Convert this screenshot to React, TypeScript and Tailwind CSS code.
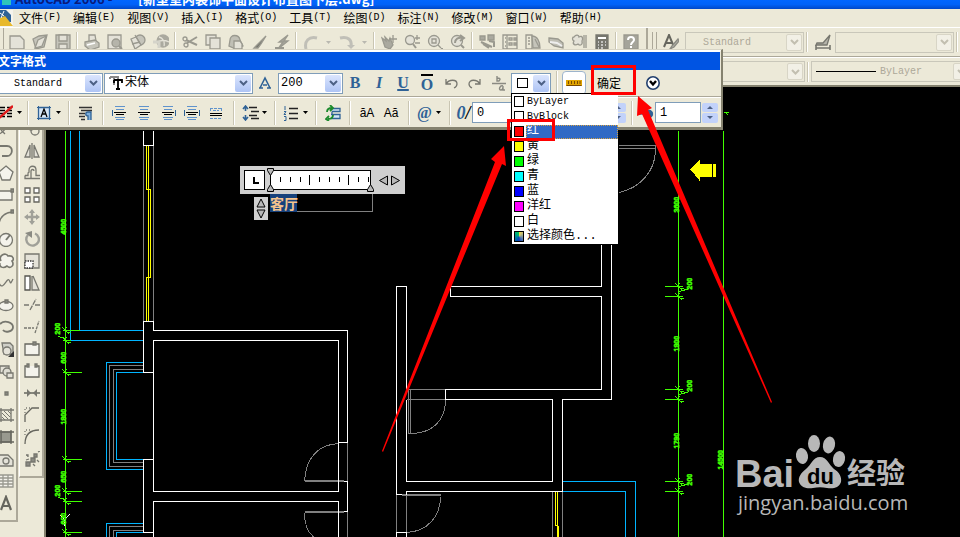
import React from "react";

type Node = React.ReactNode;

const MONO = "font-['Liberation_Mono','Noto_Sans_CJK_SC',monospace]";
const CJK = "font-['Noto_Sans_CJK_SC',sans-serif]";

function Glyph({ children, w = 16, color = "#8a8a82" }: { children: Node; w?: number; color?: string }) {
  return (
    <svg width={w} height={16} viewBox={`0 0 ${w} 16`} fill="none" stroke={color} strokeWidth={1.3} className="shrink-0" aria-hidden="true">
      {children}
    </svg>
  );
}

/* ---------- standard toolbar glyphs ---------- */
const F = "#e4e2d8";
const std: Record<string, Node> = {
  new: <path d="M1 2h10l4 4v9H1z" fill={F} />,
  open: <><path d="M1 5l6-3 8-1-3 12-8 2z" fill="#c5c4ba" /><path d="M6 6l8-4-4 10-7 2z" fill={F} /></>,
  save: <><path d="M1 1h14v14H1z" fill="#c5c4ba" /><path d="M4 1h8v6H4zM4 10h8v5H4z" fill={F} /></>,
  print: <><path d="M5 7V1h6l1 6" fill={F} /><path d="M1 8l10-2 4 3v4l-9 3-5-4z" fill="#c5c4ba" /><path d="M3 11l8-2" stroke="#fff" /></>,
  preview: <><path d="M1 1h13v14H1z" fill={F} /><circle cx="9" cy="9" r="4" fill="#b5b4aa" /><path d="M12 12l3 3" strokeWidth={2} /></>,
  publish: <><circle cx="10" cy="6" r="5" fill="#c5c4ba" /><path d="M1 5l5-2 5 8-6 4z" fill={F} /><path d="M2 10l8-2M5 1l6 10" /></>,
  globe: <><circle cx="10" cy="7" r="6" fill="#aaa99f" stroke="#aaa99f" /><path d="M6 3c4 1 6 5 5 9M4 8c4-2 8-2 12 0" stroke={F} /><path d="M0 8h6v6" stroke="#d5d4ca" strokeWidth={3} /></>,
  cut: <><path d="M15 3L5 9M15 11L4 6" strokeWidth={2} /><circle cx="3" cy="5" r="2" /><circle cx="4" cy="11" r="2" /></>,
  copy: <><path d="M1 1h10v10H1z" fill={F} /><path d="M5 4h10v11H5z" fill={F} /></>,
  paste: <><path d="M2 6c0-6 9-6 10 0l3 6-7 3-7-3z" fill="#c0bfb5" /><path d="M6 7h6l2 3v5H6z" fill={F} /></>,
  brush: <path d="M15 2L8 9l-5 5h4l3-4z" fill="#77776f" />,
  edit: <><path d="M14 1L5 8h4l-5 7 10-8h-4z" fill="#a5a49a" /><path d="M1 14h9" strokeWidth={2} /></>,
  undo: <path d="M3 15C1 7 6 2 14 4" strokeWidth={3} stroke="#c0bfb7" />,
  redo: <><path d="M1 4c8-2 12 2 11 8" strokeWidth={3} stroke="#c0bfb7" /><path d="M8 11h8l-4 4z" fill="#c0bfb7" stroke="none" /></>,
  pan: <><path d="M1 4l4 3-1-4 4 4 1-3 3 7-3 4-5-2z" fill="#aaa99f" /><path d="M12 1v8M8 5h8" /></>,
  zoom: <><circle cx="6" cy="6" r="4.5" fill={F} /><path d="M9 10l3 4" strokeWidth={2} /><path d="M13 1v5M11 4h5M11 9h5" /></>,
  zoomw: <><circle cx="7" cy="7" r="5.5" fill={F} /><path d="M5 5h4v4H5zM11 11l3 3" /><path d="M15 14v2" strokeWidth={2} /></>,
  zoomp: <><circle cx="7" cy="7" r="5.5" fill={F} /><path d="M11 11l3 3" strokeWidth={2} /><path d="M5 9c0-4 3-6 8-5M10 1l4 3-4 3" strokeWidth={2} /></>,
  props: <><path d="M1 2h5v4H1zM9 1h6v5H9z" fill="#aaa99f" /><path d="M2 8l11 5M4 10l6 4M10 7l5 1v5" strokeWidth={2} /></>,
  center: <path d="M1 1h14v14H1zM5 1v14M3 4h1M3 8h1M3 12h1M7 4h3v2H7zM12 4h2v2h-2zM7 9h3v2H7zM12 9h2v2h-2z" />,
  palette: <><path d="M1 1h6v14H1zM3 4h2M3 7h2M3 10h2" /><path d="M7 2c5 0 8 5 8 12H8z" fill="#c5c4ba" /><path d="M10 5l4 8" /></>,
  sheet: <><path d="M1 4l9 1 5 4v5l-9-2-5-4z" fill="#c0bfb5" /><path d="M2 8l7 1 5 3" stroke="#eee" strokeWidth={2} /></>,
  markup: <><path d="M3 3c2-3 5-2 5 0 4-2 4 2 3 4 1 4-2 5-4 3-3 2-6 0-4-3-2-1-2-4 0-4z" fill={F} /><path d="M13 1v13M15 1v13" /></>,
  calc: <><path d="M2 1h12v14H2z" fill="#77776f" stroke="#77776f" /><path d="M4 4h8" stroke="#fff" strokeWidth={2} /><path d="M4 8h1M7 8h2M11 8h1M4 11h1M7 11h2M11 11h1M4 14h1M7 14h2" stroke="#ddd" /></>,
  help: <><path d="M1 1h14v14H1z" fill="#a5a49a" /><path d="M5 6c0-4 6-4 6 0 0 2-3 2-3 5M8 12v2" stroke="#fff" strokeWidth={2} /></>,
};

/* ---------- draw and modify palette glyphs ---------- */
const draw: [string, Node][] = [
  ["直线", <path d="M2 14L14 2" />],
  ["构造线", <path d="M1 13c4-1 7-6 12-12M3 9l4 4" />],
  ["多段线", <path d="M2 3h7c7 0 6 10 0 10H4" strokeWidth={1.8} />],
  ["正多边形", <path d="M8 1l7 6-3 8H4L1 7z" fill="#f4f3ec" />],
  ["矩形", <><path d="M1 4h13v9H1z" fill="#f4f3ec" /><path d="M13 2h3v3h-3z" fill="#8a8a82" /></>],
  ["圆弧", <><path d="M1 15C2 8 6 4 14 3" /><path d="M13 1h3v3h-3z" fill="#8a8a82" /></>],
  ["圆", <><circle cx="8" cy="9" r="6.5" fill="#f4f3ec" /><path d="M8 9l4-5" strokeWidth={2} /></>],
  ["修订云线", <path d="M3 8C0 2 8-1 10 3c6-1 6 4 4 5 3 5-2 8-5 5-4 3-8 1-7-3" fill="#f4f3ec" strokeWidth={1.6} />],
  ["样条曲线", <path d="M1 8c4 9 8-6 10-3s1 5 4-1" />],
  ["椭圆", <><ellipse cx="8" cy="9" rx="7" ry="4.5" fill="#f4f3ec" /><path d="M7 3h3v3H7z" fill="#8a8a82" /></>],
  ["椭圆弧", <path d="M2 5c5-5 13-1 13 3 0 5-8 6-10 3" strokeWidth={1.8} />],
  ["插入块", <><path d="M4 2h8l3 3v8H6z" fill="#d0d0c8" /><circle cx="9" cy="10" r="4" fill={F} /><path d="M16 10v6h-6z" fill="#333" stroke="none" /></>],
  ["创建块", <><path d="M2 3h9v7H2z" fill={F} /><circle cx="9" cy="9" r="4" fill="#dddcd2" /><path d="M9 10h6v5H9z" fill={F} /></>],
  ["点", <path d="M7 7h3v3H7z" fill="#8a8a82" />],
  ["图案填充", <><path d="M3 1v14M13 1v14M1 3h15M1 13h15" /><path d="M4 6l6 6M4 10l3 3M6 4l6 6M10 4l3 3" strokeWidth={1} /></>],
  ["渐变色", <><path d="M3 3h10v10H3z" fill="#99998f" /><path d="M3 1v14M13 1v14M1 3h15M1 13h15" stroke="#66665e" /></>],
  ["面域", <><path d="M1 4h9l5 5v6H1z" fill={F} /><circle cx="8" cy="10" r="3" /></>],
  ["表格", <path d="M1 2h14v12H1zM1 5h14M1 8h14M1 11h14M5 2v12M10 2v12" fill="#f4f3ec" stroke="#99998f" />],
  ["多行文字", <path d="M3 15L8 2l5 13M5 11h7" strokeWidth={2.2} stroke="#66665e" />],
];
const modify: [string, Node][] = [
  ["删除", <path d="M2 12l8-8 4 3-8 7z" fill={F} />],
  ["复制", <><circle cx="7" cy="5" r="4" /><circle cx="11" cy="10" r="4" /></>],
  ["镜像", <path d="M6 2v12H1zM10 2v12h5zM8 0v16" fill={F} />],
  ["偏移", <path d="M1 10.500h3V9C4 7 5 7 5 7V5c0-5 7-5 7 0v5.500h4M1 10.500v3h15M7 13V6c0-2 3-2 3 0" />],
  ["阵列", <path d="M1 1h5v5H1zM10 1h5v5h-5zM1 10h5v5H1zM10 10h5v5h-5z" fill="#fff" stroke="#66665e" />],
  ["移动", <g stroke="#a0a098"><path d="M8 2v12M2 8h12" strokeWidth={2.4} /><path d="M8 0l3 4H5zM8 16l3-4H5zM0 8l4-3v6zM16 8l-4-3v6z" fill="#a0a098" stroke="none" /></g>],
  ["旋转", <g stroke="#a0a098"><path d="M4 4a6.300 6.300 0 1 0 7-1.500" strokeWidth={2.4} /><path d="M1 2l7-2v7z" fill="#8a8a82" stroke="none" /></g>],
  ["缩放", <><path d="M1 1h14v14H1z" fill={F} /><path d="M1 8h8v7H1z" strokeDasharray="1.500 1" stroke="#333" fill="#fff" /></>],
  ["拉伸", <><path d="M1 1h5v14H1z" fill="#fff" stroke="#55554f" /><path d="M8 1v14h7L9 1" fill={F} /></>],
  ["修剪", <path d="M0 8h5M11 8h5M6 13l6-11" strokeDasharray="5 1" />],
  ["延伸", <path d="M0 9h10M11 14l4-12" strokeDasharray="3 1" />],
  ["打断于点", <><path d="M1 3h14v11H1z" fill="#f4f3ec" stroke="#66665e" /><path d="M9 1h3v3H9z" fill="#8a8a82" /></>],
  ["打断", <><path d="M4 3H1v11h14V3h-3" fill="#f4f3ec" stroke="#66665e" /><path d="M3 1h2v3H3zM11 1h2v3h-2z" fill="#8a8a82" /></>],
  ["合并", <><path d="M0 8h16" strokeWidth={1.5} stroke="#66665e" /><path d="M3 4l4 4-4 4zM13 4L9 8l4 4z" fill="#77776f" stroke="none" /></>],
  ["倒角", <><path d="M1 15V8l7-7h7" stroke="#66665e" /><path d="M1 6V1h6" strokeDasharray="1 2" /></>],
  ["圆角", <><path d="M1 15C1 6 6 1 15 1" stroke="#66665e" /><path d="M1 6V1h6" strokeDasharray="1 2" /></>],
  ["分解", <path d="M2 11h4v4H2zM7 7h4v4H7zM10 3h3v3h-3zM2 4h2v2M5 8l-3 1M14 1l2-1M13 9l2 2M9 13l2 2" fill="#8a8a82" />],
];

function ToolBtn({ label, children, className = "w-6" }: { label: string; children: Node; className?: string }) {
  return (
    <button aria-label={label} className={`flex h-6 shrink-0 items-center justify-center ${className}`}>
      {children}
    </button>
  );
}

const Sep = () => (
  <div className="flex w-[11px] shrink-0 justify-center">
    <div className="h-6 w-0.5 border-r border-white bg-[#c9c5b2]" />
  </div>
);
const ThinSep = () => <div className="mx-[2px] h-5 w-0.5 shrink-0 border-r border-white bg-[#c9c5b2]" />;

function Tri({ color = "#000" }: { color?: string }) {
  return <svg width="5" height="3" viewBox="0 0 5 3" className="shrink-0" aria-hidden="true"><path d="M0 0h5L2.500 3z" fill={color} /></svg>;
}

function Combo({ label, value, className, disabled = false, pre, pad = "pl-3" }: {
  label: string; value: string; className: string; disabled?: boolean; pre?: Node; pad?: string;
}) {
  return (
    <label className={`flex h-[21px] shrink-0 items-center border p-px ${MONO} ${disabled ? "border-[#c9c7ba] bg-[#ece9d8] text-[#aca899]" : "border-[#7f9db9] bg-white text-black"} ${className}`}>
      {pre}
      <select aria-label={label} disabled={disabled} className={`h-full min-w-0 flex-1 appearance-none bg-transparent opacity-100 ${pad}`}>
        <option>{value}</option>
      </select>
      <span className={`flex h-full w-4 items-center justify-center rounded-xs ${disabled ? "border border-[#d8d5c6] bg-[#f2f0e6]" : "bg-linear-to-b from-[#dbe5fd] to-[#aec4f5]"}`}>
        <svg width="9" height="6" viewBox="0 0 9 6" fill="none" stroke={disabled ? "#c2bfb0" : "#4d6185"} strokeWidth="2" aria-hidden="true"><path d="M1 1l3.500 3.500L8 1" /></svg>
      </span>
    </label>
  );
}

function Spin() {
  return (
    <span className="ml-px flex h-5 w-4 shrink-0 flex-col gap-px">
      {["M1 4l3-3 3 3z", "M1 1l3 3 3-3z"].map((d, i) => (
        <button key={d} aria-label={i ? "减小" : "增大"} className="flex flex-1 items-center justify-center rounded-xs bg-[#c2d2fa]">
          <svg width="8" height="5" viewBox="0 0 8 5"><path d={d} fill="#4d6185" /></svg>
        </button>
      ))}
    </span>
  );
}

function NumBox({ label, value, className }: { label: string; value: string; className: string }) {
  return (
    <>
      <input aria-label={label} defaultValue={value} className={`h-[21px] shrink-0 border border-[#7f9db9] bg-white pl-1 text-xs outline-none ${MONO} ${className}`} />
      <Spin />
    </>
  );
}

/* ---------- application chrome ---------- */
const menus: [string, string][] = [
  ["文件", "F"], ["编辑", "E"], ["视图", "V"], ["插入", "I"], ["格式", "O"], ["工具", "T"],
  ["绘图", "D"], ["标注", "N"], ["修改", "M"], ["窗口", "W"], ["帮助", "H"],
];

const stdGroups: string[][] = [
  ["new", "open", "save"],
  ["print", "preview", "publish", "globe"],
  ["cut", "copy", "paste", "brush", "edit"],
  ["undo", "v", "redo", "v"],
  ["pan", "zoom", "zoomw", "zoomp"],
  ["props", "center", "palette", "sheet", "markup", "calc"],
  ["help"],
];

function Chrome() {
  return (
    <header className="shrink-0 bg-[#ece9d8]">
      <div className="flex h-[9px] items-end overflow-hidden bg-linear-to-b from-[#0066ff] via-[#0062f8] to-[#0048c8]">
        <div className={`mb-[4px] flex pl-[2px] text-[13px] leading-[13px] font-bold whitespace-pre ${CJK}`}>
          <span className="flex w-[136px] items-end gap-1 text-[#0a1a7a]"><i className="h-[5px] w-[9px] bg-[#2fc4bb]" />AutoCAD 2006 -</span>
          <span className="text-white">[新型室内装饰平面设计布置图下层.dwg]</span>
        </div>
      </div>
      <nav className="flex h-[19px] items-center border-b border-white">
        <svg width="13" height="17" viewBox="0 0 13 17" className="mr-[6px] shrink-0" aria-hidden="true">
          <path d="M0 0h13v17H0z" fill="#f4f3ec" /><path d="M0 0h6l5 5v7H0z" fill="#2f6296" />
          <path d="M0 8l5-2 8 10H0z" fill="#e8b92c" /><path d="M0 3l4 3M4 1L1 8" stroke="#fff" />
        </svg>
        <div className="flex gap-3">
          {menus.map(([t, k]) => (
            <button key={k} className={`flex items-center text-xs leading-4 ${CJK}`}>
              {t}<span className={`text-[10px] ${MONO}`}>({k})</span>
            </button>
          ))}
        </div>
      </nav>
      <div className="flex h-[29px] items-center overflow-hidden border-b border-[#aca899] pl-[3px]">
        <div className="mr-px h-full w-px bg-[#aca899]" />
        {stdGroups.map((g, i) => (
          <React.Fragment key={i}>
            {i > 0 && <ThinSep />}
            {g.map((n, j) =>
              n === "v" ? <ToolBtn key={j} label="更多" className="w-[13px]"><Tri color="#b9b8b0" /></ToolBtn>
                : <ToolBtn key={j} label={n} className="w-[23px]"><Glyph color="#9a998f">{std[n]}</Glyph></ToolBtn>
            )}
          </React.Fragment>
        ))}
        <div className="ml-1 flex h-full gap-[3px] border-l-2 border-[#aca899] py-1 pl-1">
          <div className="w-px bg-[#aca899]" /><div className="w-px bg-[#aca899]" />
        </div>
        <ToolBtn label="文字样式" className="mx-px w-[26px]">
          <Glyph color="#66665e"><path d="M1 13L6 1l5 12M3 9h6" strokeWidth={2} /><path d="M15 5L9 12l-2 3 4-2 5-6z" fill="#b5b4aa" stroke="#8a8a82" /></Glyph>
        </ToolBtn>
        <Combo label="文字样式" value="Standard" disabled className="w-[119px] text-[10px]" pad="pl-4" />
        <ThinSep />
        <ToolBtn label="标注样式" className="w-[25px]">
          <Glyph color="#77776f"><path d="M15 1L8 9H2l-1 2h11z" fill="#b5b4aa" /><path d="M1 14h14M1 11v5M15 11v5" strokeWidth={1.6} /></Glyph>
        </ToolBtn>
        <Combo label="标注样式" value="" disabled className="w-[119px]" />
        <ThinSep />
      </div>
      <div className="flex h-[30px] items-center overflow-hidden border-t border-b-2 border-t-white border-b-[#85826f] pl-[640px]">
        <Combo label="颜色" value="" disabled className="w-[165px]" />
        <ThinSep />
        <Combo label="线型" value="ByLayer" disabled className="w-[160px] text-[10px]" pad="pl-1" pre={<span className="ml-[3px] h-px w-[60px] bg-black" />} />
      </div>
    </header>
  );
}

function Palette({ items, className, slot }: { items: [string, Node][]; className: string; slot: string }) {
  return (
    <div className={`flex flex-col self-start overflow-hidden border-r-2 border-b-2 border-[#aca899] pt-[9px] pb-[6px] ${className}`}>
      {items.map(([label, g]) => (
        <button key={label} aria-label={label} className={`flex h-[22px] shrink-0 items-center justify-center ${slot}`}>
          <Glyph color="#77776f">{g}</Glyph>
        </button>
      ))}
    </div>
  );
}

/* ---------- drawing area ---------- */
function Tick({ x, y, to }: { x: number; y: number; to: [number, number] }) {
  return <path d={`M${to[0]} ${y}H${to[1]}M${x - 3} ${y - 3}l7 7M${x - 3} ${y + 1}l4-4M${x + 1} ${y + 2}h4`} />;
}

const dims: [string, number, number][] = [
  ["4500", 65, 234], ["200", 59, 334], ["600", 65, 363], ["1800", 65, 424], ["650", 65, 482],
  ["200", 59, 496], ["600", 65, 524], ["3600", 678, 212], ["200", 691, 289], ["1900", 678, 351],
  ["200", 691, 391], ["1790", 678, 448], ["200", 691, 485], ["14500", 722, 469],
];

function Plan() {
  return (
    <svg width="914" height="450" viewBox="45.500 86.500 914 450" fill="none" strokeWidth="1" shapeRendering="crispEdges" className="block shrink-0" role="img" aria-label="平面图">
      <g stroke="#808080">
        <path d="M143 145V321M153 145V321" />
        <path d="M143 365H109V466H143M143 369H113V462H143M143 526H109V537M143 530H113V537" />
        <path d="M347 442V481M347 511V537M396 494V532M406 494V532M552 491V537M562 491V537" />
        <path d="M445 389H408V433H410V389M406 399H445V402C444 420 432 433 410 433" />
        <path d="M338 443C318 444 305 457 304 481M304 512C304 524 308 533 314 537M440 496C440 516 427 531 406 532" />
        <path d="M304 480.500H343M304 511.500H343M401 494.500H440" strokeWidth="2" />
        <path d="M618 145H655V151C654 171 640 187 619 192M618 148H655" />
      </g>
      <g stroke="#00b4ff">
        <path d="M70 130V340H143M79 130V330H143" />
        <path d="M143 362H106V469H143M143 372H116V459H143M143 523H106V537M143 532H116V537" />
        <path d="M562 491V481H635V537M562 491H625V537" />
      </g>
      <g stroke="#ffff00">
        <path d="M146 145V189H150V277H146V321M148 145V321M555 491V525H557V537M557 491V525M558 525V537" />
      </g>
      <path d="M690 169l9-10v4h12v13h-12v4zM712 163h3v13h-3z" fill="#ffff00" />
      <g stroke="#ffffff">
        <path d="M143 130V145H153V130M153 321H143V372H153M153 321V330H347V442H338M153 491V340H338V491H153" />
        <path d="M153 459H143V532H153M153 537V501H338V537M343 481H347V511H343" />
        <path d="M401 494H396V286H406V389M406 399V481H552V399H445V389H601V296H450V286H601V244M611 244V399H562V491H406V494M396 537V532H406V537" />
        <path d="M64 525V519M60 515l4 4 5-5" />
      </g>
      <g stroke="#40ff00">
        <path d="M65 130V537M678 130V537M723 130V537M62 330H79M723 112h5M725 112l3 3" />
        {[330, 340, 372, 459, 491, 501, 532].map((y) => <Tick key={y} x={65} y={y} to={[62, y === 330 || y === 340 ? 70 : 81]} />)}
        {[286, 296, 389, 399, 481, 491].map((y) => <Tick key={y} x={678} y={y} to={[664, 682]} />)}
        <path d="M679 291l10-3M679 394l10-3M679 486l10-3M58 336l7 2M58 497l7 2" />
      </g>
      <g fill="#40ff00" stroke="#40ff00" strokeWidth="0.500" className="font-['Liberation_Sans',sans-serif] text-[7px] font-bold">
        {dims.map(([t, x, y], i) => <text key={i} transform={`translate(${x} ${y}) rotate(-90)`}>{t}</text>)}
      </g>
    </svg>
  );
}

function InPlaceText() {
  return (
    <div className="absolute top-[166px] left-[240px]">
      <svg width="165" height="28" viewBox="0 0 165 28" shapeRendering="crispEdges" className="block" aria-hidden="true">
        <path d="M0 0h165v28H0z" fill="#d0d0d0" />
        <path d="M4.500 4.500h20v19h-20zM30.500 4.500h100v19h-100z" fill="#fff" stroke="#000" />
        <path d="M14 11v6h5" fill="none" stroke="#000" strokeWidth="2" />
        <path d="M40.500 11v5M50.500 11v5M60.500 11v5M69.500 9v10M79.500 11v5M89.500 11v5M99.500 11v5M108.500 9v10M118.500 11v5M128.500 11v5" stroke="#000" />
        <g fill="#b8b8b8" stroke="#000" shapeRendering="auto">
          <path d="M27.500 2.500h6v2l-3 5-3-5zM27.500 25.500h6v-2l-3-5-3 5zM127.500 25.500h6v-2l-3-5-3 5z" />
          <path d="M139.500 14.500l8-4.500v9zM159.500 14.500l-8-4.500v9z" />
        </g>
      </svg>
      <div className="flex pl-[14px]">
        <svg width="14" height="23" viewBox="0 0 14 23" className="mt-[3px]" aria-hidden="true">
          <path d="M0 0h14v23H0z" fill="#d0d0d0" /><path d="M7 2l4 8H3zM7 21l4-8H3z" fill="#b8b8b8" stroke="#000" />
        </svg>
        <div className="ml-[2px] h-[18px] w-[103px] border-r border-b border-[#808080]">
          <span className={`block w-[27px] bg-[#16417c] text-sm leading-[18px] font-bold whitespace-nowrap text-[#f5c48e] ${CJK}`}>客厅</span>
        </div>
      </div>
    </div>
  );
}

/* ---------- text formatting bar ---------- */
const BLUE = "#2f6296";

function AlignIcon({ kind }: { kind: "l" | "c" | "r" | "j" | "d" }) {
  if (kind === "d") {
    return (
      <Glyph color="#000">
        <g shapeRendering="crispEdges" strokeWidth={1}>
          <path d="M2 3.500h12M2 13.500h12M2.500 3v4M13.500 3v4M5 5.500h6" stroke="#5f93cc" strokeDasharray="3 1" />
          <path d="M2 8.500h12M2 10.500h12" />
        </g>
      </Glyph>
    );
  }
  return (
    <Glyph color="#000">
      <g shapeRendering="crispEdges" strokeWidth={1}>
        <path d="M3 1.500h10M4 4.500h8M3 12.500h10M4 14.500h8" stroke="#5f93cc" />
        <path d="M2 7.500h12M4 9.500h8" />
        {(kind === "l" || kind === "j") && <path d="M.5 5v6" stroke={BLUE} />}
        {(kind === "r" || kind === "j") && <path d="M15.500 5v6" stroke={BLUE} />}
      </g>
    </Glyph>
  );
}

function Style({ children, className = "" }: { children: Node; className?: string }) {
  return <span className={`font-['Liberation_Serif',serif] text-base leading-4 font-bold text-[#2f6296] ${className}`}>{children}</span>;
}

function FormatBar() {
  return (
    <section aria-label="文字格式" className="absolute top-[49px] left-0 w-[723px] border-t border-r-2 border-b-[3px] border-t-[#d8d5c6] border-r-[#85826f] border-b-[#85826f] bg-[#ece9d8]">
      <div className="border-t-2 border-r border-white border-r-[#ece9d8]">
        <h2 className={`h-[18px] bg-[#0054e3] text-xs leading-[17px] font-bold text-white ${CJK}`}><span className="-ml-[2px]">文字格式</span></h2>
      </div>
      <div className="flex h-[27px] items-center border-b border-[#aca899]">
        <Combo label="样式" value="Standard" className="w-[103px] border-l-0 text-[10px]" pad="pl-[13px]" />
        <Combo label="字体" value="宋体" className="ml-px w-[149px] text-xs" pad="pl-[2px]"
          pre={<svg width="14" height="14" viewBox="0 0 14 14" className="ml-[3px]" aria-hidden="true"><path d="M1 1h8v3M5 1v8M1 1v2" fill="none" stroke="#888" strokeWidth="2" /><path d="M5 4h8v3M9 4v9M5 4v3M7 13h4" fill="none" stroke="#000" strokeWidth="1.800" /></svg>} />
        <ToolBtn label="注释性"><Glyph color={BLUE}><path d="M3 13L8 3l5 10M6 10h4M2 13h4M10 13h4" strokeWidth={1.6} /></Glyph></ToolBtn>
        <Combo label="文字高度" value="200" className="ml-px w-[65px] text-xs" pad="pl-px" />
        <ToolBtn label="粗体"><Style>B</Style></ToolBtn>
        <ToolBtn label="斜体"><Style className="italic">I</Style></ToolBtn>
        <ToolBtn label="下划线"><Style className="underline decoration-2">U</Style></ToolBtn>
        <ToolBtn label="上划线"><Style className="border-t-2 border-black pt-px leading-3">O</Style></ToolBtn>
        <ToolBtn label="放弃"><Glyph color="#77776f"><path d="M3 4v5h5M3 9c3-5 11-5 11 0 0 2-1 3-3 4" /></Glyph></ToolBtn>
        <ToolBtn label="重做"><Glyph color="#77776f"><path d="M13 4v5H8M13 9C10 4 2 4 2 9c0 2 1 3 3 4" /></Glyph></ToolBtn>
        <ToolBtn label="堆叠"><Glyph color="#8a8a82"><path d="M1 8.500h14M6 1v5h2c2-2 1-3-2-3M12 11c-3-1-5 4-2 4 2 0 2-3 2-4v4h2" strokeWidth={1.4} /></Glyph></ToolBtn>
        <Combo label="文字颜色" value="" className="w-[40px]" pad="pl-0" pre={<span className="ml-1 h-[10px] w-[11px] border border-black bg-white" />} />
        <Sep />
        <button aria-label="标尺" className="flex h-6 w-6 shrink-0 items-center justify-center rounded border border-[#9db4cc] bg-white">
          <svg width="16" height="6" viewBox="0 0 16 6" aria-hidden="true"><path d="M0 0h16v6H0z" fill="#e0a400" /><path d="M.5 5.500h15M2.500 1v3M5.500 1v3M8.500 1v3M11.500 1v3M14 1v3" stroke="#7a4a00" /></svg>
        </button>
        <Sep />
        <button className={`flex h-6 w-11 shrink-0 items-center text-xs whitespace-nowrap ${CJK}`}>确定</button>
        <ToolBtn label="选项"><Glyph color="#22406e"><circle cx="8" cy="8" r="6.200" fill="#fff" strokeWidth={1.6} /><path d="M5 6l3 3.500L11 6" stroke="#000" strokeWidth={2.4} /></Glyph></ToolBtn>
      </div>
      <div className="flex h-[30px] items-center border-t border-white">
        <ToolBtn label="分栏" className="w-[22px] justify-start gap-1"><Glyph w={13} color="#000"><path d="M0 2.500h5M7 2.500h5M0 5.500h5M7 5.500h5M0 8.500h5M7 8.500h5M0 11.500h5M7 11.500h5" /><path d="M-2 14L13 1" stroke="#e01818" strokeWidth={2.4} /></Glyph><Tri /></ToolBtn>
        <Sep />
        <ToolBtn label="多行文字对正" className="w-[30px] gap-1"><Glyph color={BLUE}><path d="M2.500 2.500h11v11h-11z" fill="#d5e6f6" /><path d="M5 12l3-8 3 8M6 9h4" stroke="#000" /><path d="M1 2.500h14M1 13.500h14M2.500 1v14M13.500 1v14" strokeWidth={1} /></Glyph><Tri /></ToolBtn>
        <Sep />
        <ToolBtn label="段落" className="w-[23px]"><Glyph color="#000"><path d="M1 2.500h13M3 5.500h11M1 8.500h6M1 11.500h6M3 14.500h4" strokeWidth={1.6} stroke="#333" /><path d="M13 15V7h-3c-3 0-3 4 0 4v4" stroke={BLUE} fill="#7fb0de" /></Glyph></ToolBtn>
        <Sep />
        <ToolBtn label="左对齐"><AlignIcon kind="l" /></ToolBtn>
        <ToolBtn label="居中"><AlignIcon kind="c" /></ToolBtn>
        <ToolBtn label="右对齐"><AlignIcon kind="r" /></ToolBtn>
        <ToolBtn label="对正"><AlignIcon kind="j" /></ToolBtn>
        <ToolBtn label="分布"><AlignIcon kind="d" /></ToolBtn>
        <Sep />
        <ToolBtn label="行距" className="w-[30px] gap-0.5"><Glyph w={18} color="#222"><path d="M7 2.500h8M9 6.500h8M7 10.500h8M9 13.500h8" /><path d="M3.500 1v5M3.500 10v5M1 4l2.500-3L6 4M1 12l2.500 3L6 12" stroke={BLUE} strokeWidth={1.6} /></Glyph><Tri /></ToolBtn>
        <Sep />
        <ToolBtn label="编号" className="w-[30px] gap-1"><Glyph color="#222"><path d="M6 3.500h9M6 8.500h9M6 13.500h9" /><path d="M2 1v4M1 6.500h2l-2 3h2M1 11.500h2v4H1" stroke={BLUE} strokeWidth={1} /></Glyph><Tri /></ToolBtn>
        <Sep />
        <ToolBtn label="插入字段" className="w-[23px]"><Glyph color={BLUE}><path d="M7 3.500h8v3H7M6 9.500h9v4H6M7 6.500v3" fill="#d5e6f6" /><path d="M2 7c0-3 2-4 5-4M5 0l3 3-3 3M8 10c0 3-2 4-5 4M4 11l-3 3 3 2" stroke="#1c8a2c" strokeWidth={1.8} /></Glyph></ToolBtn>
        <Sep />
        <ToolBtn label="大写"><span className="font-['Liberation_Sans',sans-serif] text-xs">ăA</span></ToolBtn>
        <ToolBtn label="小写"><span className="font-['Liberation_Sans',sans-serif] text-xs">Aă</span></ToolBtn>
        <Sep />
        <ToolBtn label="符号" className="w-[30px] gap-1"><Style>@</Style><Tri /></ToolBtn>
        <Sep />
        <ToolBtn label="倾斜角度" className="w-[17px]"><Style className="text-lg italic">0<span className="text-black">/</span></Style></ToolBtn>
        <NumBox label="倾斜角度" value="0" className="w-[52px]" />
        <Sep />
        <ToolBtn label="追踪" className="w-5"><Glyph color={BLUE}><path d="M2 11h12M4 8l-3 3 3 3M12 8l3 3-3 3" /></Glyph></ToolBtn>
        <NumBox label="追踪" value="1" className="w-[37px]" />
        <Sep />
        <ToolBtn label="宽度因子" className="w-[18px]"><Glyph color={BLUE}><circle cx="11" cy="9" r="3.500" fill={BLUE} /><path d="M1 9h8" /></Glyph></ToolBtn>
        <NumBox label="宽度因子" value="1" className="w-[46px]" />
      </div>
    </section>
  );
}

const colors: [string, string][] = [
  ["ByLayer", "bg-white"], ["ByBlock", "bg-white"], ["红", "bg-[#ff0000]"], ["黄", "bg-[#ffff00]"],
  ["绿", "bg-[#00ff00]"], ["青", "bg-[#00ffff]"], ["蓝", "bg-[#0000ff]"], ["洋红", "bg-[#ff00ff]"],
  ["白", "bg-white"], ["选择颜色...", "bg-conic from-yellow-300 via-blue-800 to-green-500"],
];

function ColorList() {
  return (
    <ul role="listbox" aria-label="文字颜色" className="absolute top-[93px] left-[511px] w-[107px] border-t border-l border-black bg-white">
      {colors.map(([name, sw], i) => (
        <li key={name} role="option" aria-selected={i === 2} className="flex h-[15px] items-center pl-[2px]">
          <span className={`mr-[2px] h-[11px] w-[10px] shrink-0 border border-black ${sw}`} />
          <span className={`h-[14px] flex-1 pl-px leading-[13px] whitespace-nowrap ${MONO} ${i < 2 ? "text-[10px]" : "text-xs"} ${i === 2 ? "bg-[#316ac5] text-white outline-1 -outline-offset-1 outline-[#d9a441] outline-dotted" : "text-black"}`}>{name}</span>
        </li>
      ))}
    </ul>
  );
}

function Annotations() {
  return (
    <svg width="960" height="537" viewBox="0 0 960 537" className="pointer-events-none absolute top-0 left-0" aria-hidden="true">
      <path d="M592.500 66.500h42v27h-42zM508.500 120.500h45v19h-45z" fill="none" stroke="#ff0000" strokeWidth="3" />
      <path d="M504 146l2 20-4-2L383 452l-1-1L495 162l-4-3z" fill="#ff0000" />
      <path d="M638 96l14 12-4 2L772 402l-1 1L642 114l-5 2z" fill="#ff0000" />
    </svg>
  );
}

function Watermark() {
  return (
    <svg width="180" height="90" viewBox="734 430 180 90" className="absolute top-[430px] left-[734px]" fill="#b8b8b8" role="img" aria-label="Baidu 经验">
      <text x="735" y="487" className="font-['Liberation_Sans',sans-serif] text-[38px] font-bold">Bai</text>
      <ellipse cx="802" cy="456" rx="6" ry="8" transform="rotate(-10 802 456)" />
      <ellipse cx="814" cy="443.500" rx="6" ry="8.500" />
      <ellipse cx="829" cy="445" rx="6" ry="8.500" transform="rotate(12 829 445)" />
      <ellipse cx="839" cy="459" rx="6" ry="8" transform="rotate(12 839 459)" />
      <path d="M820 457c7 0 9 8 14 12 5 3 8 8 7 13-2 6-8 7-14 6-5-1-9-1-14 0s-12 0-14-6c-1-5 2-9 7-13 5-4 7-12 14-12z" />
      <text x="807" y="484" fill="#000" className="font-['Liberation_Sans',sans-serif] text-[22px] font-bold">du</text>
      <text x="847" y="484" className="font-['Noto_Sans_CJK_SC',sans-serif] text-[29px] font-bold">经验</text>
      <text x="738" y="510" className="font-['Open_Sans','Noto_Sans',sans-serif] text-[20px]">jingyan.baidu.com</text>
    </svg>
  );
}

export default function App() {
  return (
    <div className="relative flex h-screen w-full flex-col overflow-hidden bg-black">
      <Chrome />
      <main className="flex min-h-0 flex-1">
        <aside className="flex w-[46px] shrink-0 overflow-hidden border-r-2 border-[#85826f] bg-[#ece9d8]">
          <Palette items={draw} className="w-[18px]" slot="w-3" />
          <Palette items={modify} className="ml-px w-[25px] border-l border-l-white" slot="w-[23px]" />
        </aside>
        <div className="min-w-0 flex-1 overflow-hidden bg-black"><Plan /></div>
      </main>
      <InPlaceText />
      <Watermark />
      <FormatBar />
      <ColorList />
      <Annotations />
    </div>
  );
}
